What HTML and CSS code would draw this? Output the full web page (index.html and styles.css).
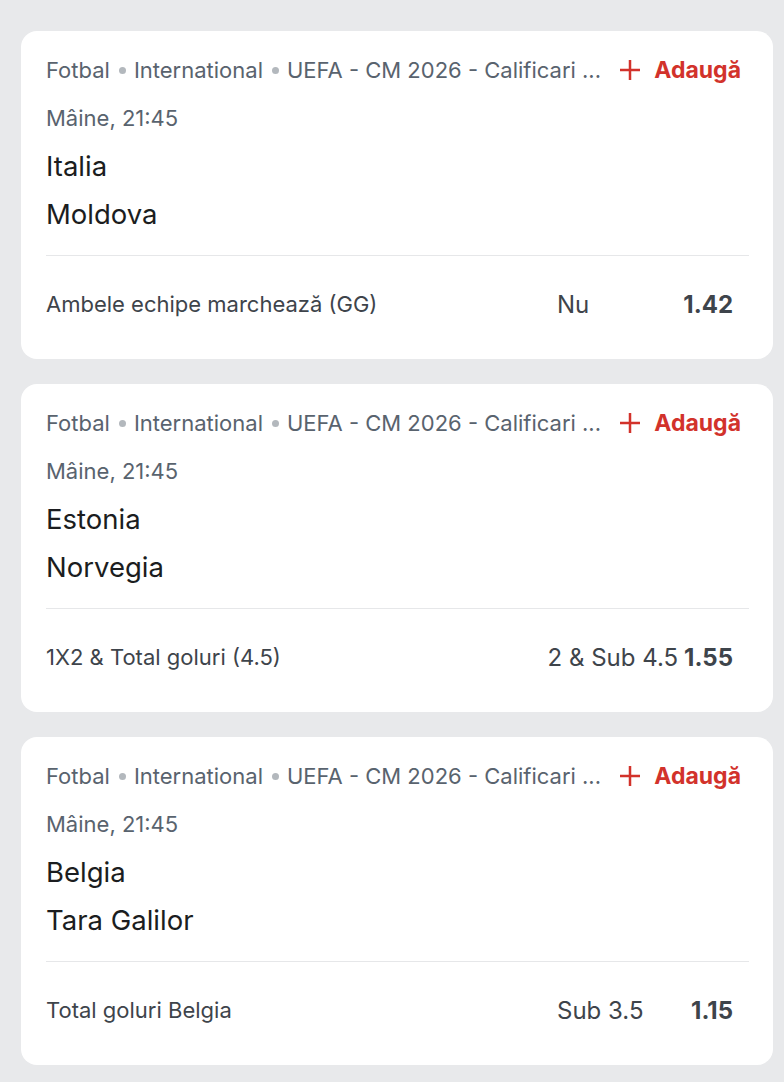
FILE: index.html
```html
<!DOCTYPE html>
<html lang="ro">
<head>
<meta charset="utf-8">
<link rel="stylesheet" href="styles.css">
</head>
<body>
<main class="list">
  <section class="card">
    <div class="head">
      <div class="crumbs">Fotbal<span class="dot"></span>International<span class="dot"></span>UEFA - CM 2026 - Calificari ...</div>
      <button class="add"><svg class="plus" viewBox="0 0 22 22"><path d="M11 1v20M1 11h20"/></svg>Adaugă</button>
    </div>
    <div class="date">Mâine, 21:45</div>
    <div class="team">Italia</div>
    <div class="team">Moldova</div>
    <div class="divider"></div>
    <div class="market">
      <div class="label">Ambele echipe marchează (GG)</div>
      <div class="pick"><span class="sel">Nu</span><span class="odd">1.42</span></div>
    </div>
  </section>
  <section class="card">
    <div class="head">
      <div class="crumbs">Fotbal<span class="dot"></span>International<span class="dot"></span>UEFA - CM 2026 - Calificari ...</div>
      <button class="add"><svg class="plus" viewBox="0 0 22 22"><path d="M11 1v20M1 11h20"/></svg>Adaugă</button>
    </div>
    <div class="date">Mâine, 21:45</div>
    <div class="team">Estonia</div>
    <div class="team">Norvegia</div>
    <div class="divider"></div>
    <div class="market">
      <div class="label">1X2 &amp; Total goluri (4.5)</div>
      <div class="pick"><span class="sel">2 &amp; Sub 4.5</span><span class="odd">1.55</span></div>
    </div>
  </section>
  <section class="card">
    <div class="head">
      <div class="crumbs">Fotbal<span class="dot"></span>International<span class="dot"></span>UEFA - CM 2026 - Calificari ...</div>
      <button class="add"><svg class="plus" viewBox="0 0 22 22"><path d="M11 1v20M1 11h20"/></svg>Adaugă</button>
    </div>
    <div class="date">Mâine, 21:45</div>
    <div class="team">Belgia</div>
    <div class="team">Tara Galilor</div>
    <div class="divider"></div>
    <div class="market">
      <div class="label">Total goluri Belgia</div>
      <div class="pick"><span class="sel">Sub 3.5</span><span class="odd">1.15</span></div>
    </div>
  </section>
</main>
</body>
</html>
```
FILE: styles.css
```css
html, body {
  margin: 0;
  padding: 0;
  background: #e8e9eb;
}
body {
  font-family: Inter, "Noto Sans", sans-serif;
}
.list {
  display: flex;
  flex-direction: column;
  gap: 25px;
  width: 752px;
  padding: 31px 0 0 21px;
}
.card {
  background: #ffffff;
  border-radius: 16px;
  padding: 15px 24px 31px 25px;
  height: 328px;
  box-sizing: border-box;
}
.head {
  display: flex;
  align-items: center;
  justify-content: space-between;
  height: 48px;
}
.crumbs {
  font-size: 22px;
  color: #59636e;
  white-space: nowrap;
  display: flex;
  align-items: center;
}
.dot {
  display: inline-block;
  width: 7px;
  height: 7px;
  border-radius: 50%;
  background: #b3b8bd;
  margin: 0 8px 0 9px;
}
.add {
  display: flex;
  align-items: center;
  gap: 13px;
  border: 0;
  background: none;
  padding: 0 8px 0 0;
  font-family: inherit;
  font-size: 23px;
  font-weight: 700;
  color: #d2322b;
}
.plus {
  width: 22px;
  height: 22px;
  fill: none;
  stroke: #d2322b;
  stroke-width: 2.5;
}
.date {
  font-size: 22px;
  color: #59636e;
  line-height: 48px;
}
.team {
  font-size: 27.5px;
  color: #1b1d20;
  line-height: 48px;
}
.divider {
  height: 1px;
  background: #e6e7e9;
  margin-top: 17px;
}
.market {
  display: flex;
  align-items: center;
  justify-content: space-between;
  margin-top: 24px;
  height: 48px;
}
.label {
  font-size: 22px;
  color: #3e444b;
}
.pick {
  display: flex;
  justify-content: space-between;
  gap: 6px;
  min-width: 176px;
  margin-right: 16px;
  font-size: 24px;
  color: #3e444b;
}
.odd {
  font-weight: 700;
}
```
